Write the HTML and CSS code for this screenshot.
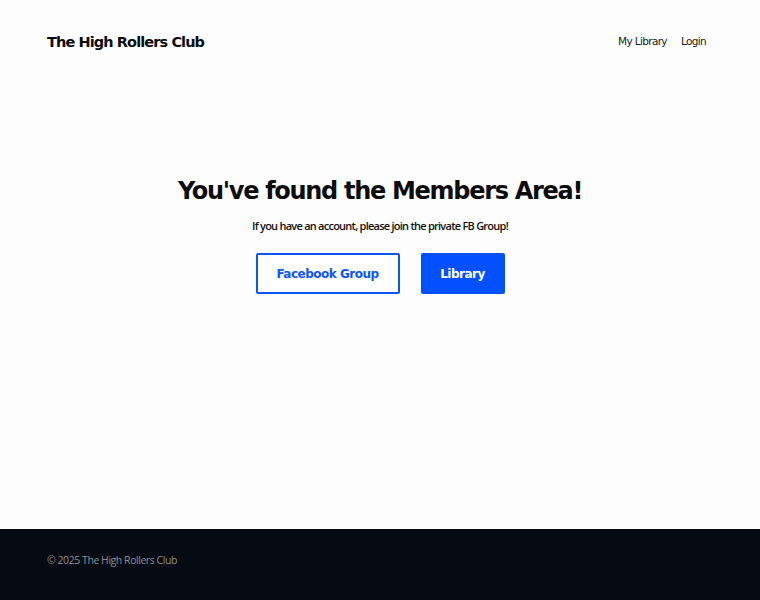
FILE: index.html
```html
<!DOCTYPE html>
<html lang="en">
<head>
<meta charset="utf-8">
<title>The High Rollers Club</title>
<link rel="stylesheet" href="styles.css">
</head>
<body>
<div class="page">
  <header class="header">
    <a class="brand" href="#">The High Rollers Club</a>
    <nav class="nav">
      <a href="#">My Library</a>
      <a href="#">Login</a>
    </nav>
  </header>
  <main class="main">
    <h1 class="title">You've found the Members Area!</h1>
    <p class="lead">If you have an account, please join the private FB Group!</p>
    <div class="actions">
      <a class="btn btn-outline" href="#">Facebook Group</a>
      <a class="btn btn-solid" href="#">Library</a>
    </div>
  </main>
  <footer class="footer">
    <p>© 2025 The High Rollers Club</p>
  </footer>
</div>
</body>
</html>
```
FILE: styles.css
```css
* { box-sizing: border-box; }
html, body { margin: 0; padding: 0; }
body {
  background: #fdfdfd;
  font-family: "Open Sans", "Liberation Sans", sans-serif;
  color: #0b0b0b;
}
a { text-decoration: none; }
.page {
  min-height: 600px;
  display: flex;
  flex-direction: column;
}
.header {
  display: flex;
  justify-content: space-between;
  align-items: flex-start;
  padding: 32px 54px 0 47px;
  height: 82px;
}
.brand {
  font-family: "DejaVu Sans", sans-serif;
  font-weight: bold;
  font-size: 14.5px;
  letter-spacing: -0.9px;
  color: #0b0b0b;
  line-height: 20px;
}
.nav {
  display: flex;
  gap: 14px;
  padding-top: 1px;
}
.nav a {
  font-family: "DejaVu Sans", sans-serif;
  font-size: 10.5px;
  font-weight: 500;
  letter-spacing: -0.65px;
  color: #1a1a1a;
  line-height: 16px;
}
.main {
  flex: 1;
  display: flex;
  flex-direction: column;
  align-items: center;
  padding-top: 92px;
}
.title {
  margin: 0;
  font-family: "DejaVu Sans", sans-serif;
  font-weight: bold;
  font-size: 24px;
  letter-spacing: -1.3px;
  line-height: 34px;
  color: #0b0b0b;
}
.lead {
  margin: 10px 0 0;
  font-size: 11px;
  font-weight: 600;
  letter-spacing: -0.75px;
  line-height: 16px;
  color: #111;
}
.actions {
  display: flex;
  gap: 21px;
  margin-top: 19px;
}
.btn {
  height: 41px;
  display: flex;
  align-items: center;
  justify-content: center;
  font-family: "DejaVu Sans", sans-serif;
  font-weight: bold;
  font-size: 12px;
  letter-spacing: -0.5px;
  border-radius: 2px;
}
.btn-outline {
  width: 144px;
  border: 2px solid #0b55ff;
  color: #0b55ff;
  background: #fff;
}
.btn-solid {
  width: 84px;
  background: #0250ff;
  color: #fff;
}
.footer {
  height: 71px;
  background: #060b13;
  padding: 23px 47px 0;
}
.footer p {
  margin: 0;
  font-size: 10.5px;
  letter-spacing: -0.45px;
  color: #8a8f96;
  line-height: 16px;
}
```
